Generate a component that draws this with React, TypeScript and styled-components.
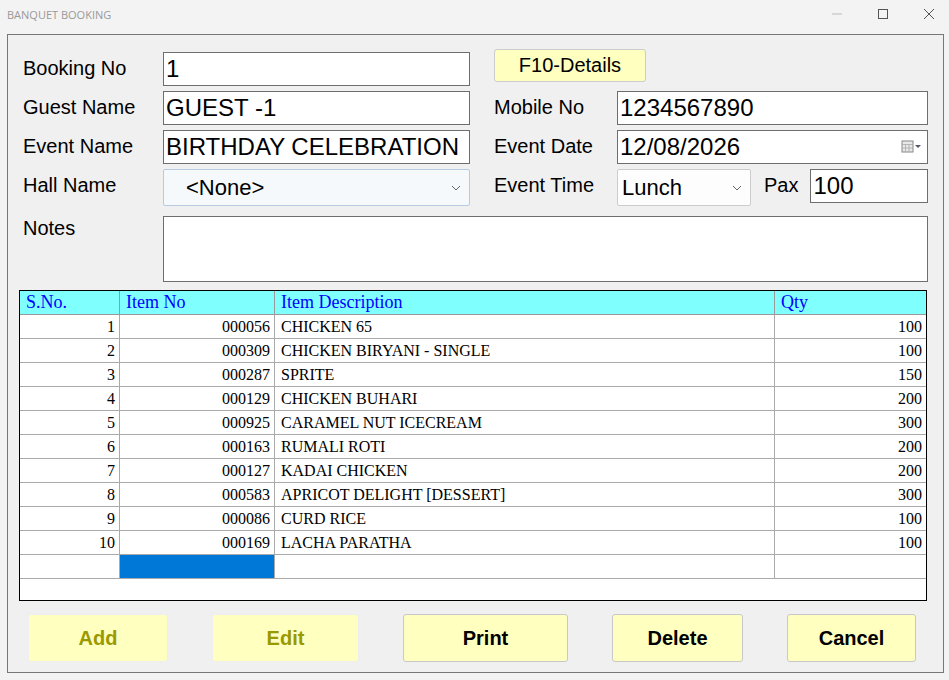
import styled, { createGlobalStyle } from "styled-components";

const Global = createGlobalStyle`
	body { margin: 0; background: #f3f3f3; font-family: "Liberation Sans", Arial, sans-serif; }
`;

const items = [
	["000056", "CHICKEN 65", 100],
	["000309", "CHICKEN BIRYANI - SINGLE", 100],
	["000287", "SPRITE", 150],
	["000129", "CHICKEN BUHARI", 200],
	["000925", "CARAMEL NUT ICECREAM", 300],
	["000163", "RUMALI ROTI", 200],
	["000127", "KADAI CHICKEN", 200],
	["000583", "APRICOT DELIGHT [DESSERT]", 300],
	["000086", "CURD RICE", 100],
	["000169", "LACHA PARATHA", 100],
] as const;

export default function App() {
	return (
		<Window>
			<Global />
			<TitleBar>
				<Title>BANQUET BOOKING</Title>
				<Controls>
					<svg width="12" height="12"><line x1="1" y1="6" x2="11" y2="6" stroke="#bbb" /></svg>
					<svg width="12" height="12"><rect x="1.5" y="1.5" width="9" height="9" fill="none" stroke="#555" /></svg>
					<svg width="12" height="12"><path d="M1 1L11 11M11 1L1 11" stroke="#555" /></svg>
				</Controls>
			</TitleBar>
			<Panel>
				<Form>
					<Label>Booking No</Label>
					<Input>1</Input>
					<F10>F10-Details</F10>

					<Label>Guest Name</Label>
					<Input>GUEST -1</Input>
					<Label $right>Mobile No</Label>
					<Input>1234567890</Input>

					<Label>Event Name</Label>
					<Input>BIRTHDAY CELEBRATION</Input>
					<Label $right>Event Date</Label>
					<Input>
						12/08/2026
						<svg width="22" height="14" style={{ marginLeft: "auto" }}>
							<rect x="1" y="1" width="11" height="11" fill="#e8e8e8" stroke="#888" />
							<path d="M1 4.5H12M4.5 4.5V12M8 4.5V12M1 8H12" stroke="#aaa" strokeWidth="0.8" />
							<path d="M14 5L20 5L17 8Z" fill="#556" />
						</svg>
					</Input>

					<Label>Hall Name</Label>
					<Combo $tint>
						<ComboText $indent>&lt;None&gt;</ComboText>
						<Chevron />
					</Combo>
					<Label $right>Event Time</Label>
					<TimeRow>
						<Combo style={{ width: 134 }}>
							<ComboText>Lunch</ComboText>
							<Chevron />
						</Combo>
						<Label>Pax</Label>
						<PaxInput>100</PaxInput>
					</TimeRow>

					<Label>Notes</Label>
					<Notes />
				</Form>

				<Grid>
					<HeadRow>
						<Head>S.No.</Head>
						<Head>Item No</Head>
						<Head>Item Description</Head>
						<Head>Qty</Head>
					</HeadRow>
					{items.map(([no, desc, qty], i) => (
						<Row key={no}>
							<Cell $right>{i + 1}</Cell>
							<Cell $right>{no}</Cell>
							<Cell>{desc}</Cell>
							<Cell $right>{qty}</Cell>
						</Row>
					))}
					<Row>
						<Cell />
						<Cell $selected />
						<Cell />
						<Cell />
					</Row>
				</Grid>

				<Buttons>
					<Btn $w={140} $disabled>Add</Btn>
					<Btn $w={147} $disabled>Edit</Btn>
					<Btn $w={165}>Print</Btn>
					<Btn $w={131}>Delete</Btn>
					<Btn $w={129}>Cancel</Btn>
				</Buttons>
			</Panel>
		</Window>
	);
}

function Chevron() {
	return (
		<svg width="10" height="6" style={{ marginLeft: "auto" }}>
			<path d="M1 1L5 5L9 1" fill="none" stroke="#666" />
		</svg>
	);
}

const Window = styled.div`
	width: 949px;
	height: 680px;
	background: #f3f3f3;
	display: flex;
	flex-direction: column;
`;

const TitleBar = styled.div`
	height: 28px;
	display: flex;
	align-items: center;
	padding: 0 14px 0 7px;
`;

const Title = styled.div`
	font-family: "Segoe UI", "Open Sans", sans-serif;
	font-size: 11px;
	color: #999;
`;

const Controls = styled.div`
	margin-left: auto;
	display: flex;
	gap: 34px;
`;

const Panel = styled.div`
	margin: 6px 5px 7px 7px;
	flex: 1;
	border: 1px solid #777;
	background: #f0f0f0;
	padding: 14px 15px 0 11px;
	display: flex;
	flex-direction: column;
`;

const Form = styled.div`
	display: grid;
	grid-template-columns: 140px 307px 147px 311px;
	row-gap: 5px;
	margin-left: 4px;
	padding-top: 3px;
	grid-template-rows: 34px 34px 34px 38px 66px;
`;

const Label = styled.div<{ $right?: boolean }>`
	font-size: 20px;
	color: #000;
	padding-top: 5px;
	padding-left: ${({ $right }) => ($right ? "24px" : "0")};
	white-space: nowrap;
`;

const Input = styled.div`
	border: 1px solid #6e6e6e;
	background: #fff;
	height: 34px;
	box-sizing: border-box;
	font-size: 24px;
	padding: 0 4px 0 2px;
	display: flex;
	align-items: center;
`;

const PaxInput = styled(Input)`
	flex: 1;
	margin-left: -1px;
`;

const F10 = styled.button`
	grid-column: 3 / 5;
	justify-self: start;
	margin-left: 24px;
	width: 152px;
	height: 33px;
	margin-top: -3px;
	background: #ffffc0;
	border: 1px solid #ccc;
	border-radius: 3px;
	font-family: inherit;
	font-size: 20px;
	color: #000;
`;

const Combo = styled.div<{ $tint?: boolean }>`
	border: 1px solid ${({ $tint }) => ($tint ? "#b6cbe0" : "#ccc")};
	background: ${({ $tint }) => ($tint ? "#f5f9fc" : "#fdfdfd")};
	height: 37px;
	box-sizing: border-box;
	display: flex;
	align-items: center;
	padding: 0 8px 0 4px;
	border-radius: 2px;
`;

const ComboText = styled.span<{ $indent?: boolean }>`
	font-size: 22px;
	padding-left: ${({ $indent }) => ($indent ? "18px" : "0")};
`;

const TimeRow = styled.div`
	display: flex;
	gap: 13px;
	align-items: flex-start;
`;

const Notes = styled.div`
	grid-column: 2 / 5;
	border: 1px solid #6e6e6e;
	background: #fff;
	margin-top: 4px;
	height: 66px;
	box-sizing: border-box;
`;

const Grid = styled.div`
	margin-top: 12px;
	width: 908px;
	height: 311px;
	box-sizing: border-box;
	border: 1px solid #000;
	background: #fff;
	font-family: "Liberation Serif", "Times New Roman", serif;
`;

const cols = "100px 155px 500px 151px";

const HeadRow = styled.div`
	display: grid;
	grid-template-columns: ${cols};
	height: 24px;
	background: #80ffff;
	border-bottom: 1px solid #999;
	box-sizing: border-box;
`;

const Head = styled.div`
	color: #0000ff;
	font-size: 18px;
	line-height: 23px;
	padding: 0 6px;
	border-right: 1px solid #999;
	&:last-child { border-right: none; }
`;

const Row = styled.div`
	display: grid;
	grid-template-columns: ${cols};
	height: 24px;
	border-bottom: 1px solid #aaa;
	box-sizing: border-box;
`;

const Cell = styled.div<{ $right?: boolean; $selected?: boolean }>`
	font-size: 16px;
	line-height: 24px;
	padding: 0 4px 0 6px;
	white-space: nowrap;
	text-align: ${({ $right }) => ($right ? "right" : "left")};
	background: ${({ $selected }) => ($selected ? "#0078d7" : "transparent")};
	border-right: 1px solid #aaa;
	&:last-child { border-right: none; }
`;

const Buttons = styled.div`
	display: flex;
	gap: 44px;
	margin: 13px 0 0 9px;
`;

const Btn = styled.button<{ $w: number; $disabled?: boolean }>`
	width: ${({ $w }) => $w}px;
	height: 48px;
	background: #ffffc0;
	border: 1px solid ${({ $disabled }) => ($disabled ? "#eee" : "#c8c8c8")};
	border-radius: 3px;
	font-family: inherit;
	font-weight: bold;
	font-size: 20px;
	color: ${({ $disabled }) => ($disabled ? "#999900" : "#000")};
`;
